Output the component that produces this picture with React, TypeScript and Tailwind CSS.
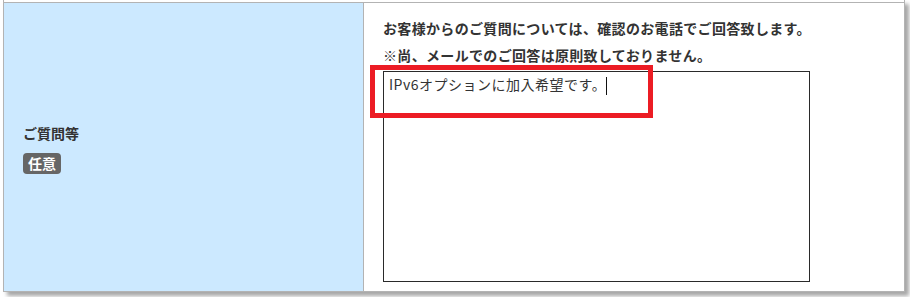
const jp = "font-['Noto_Sans_CJK_JP','Noto_Sans',sans-serif]";

export default function App() {
  return (
    <div className={`w-[910px] h-[297px] bg-white overflow-hidden pl-[3px] ${jp}`}>
      <div className="w-[902px] border-x border-b border-[#b3b3b3] shadow-[4px_4px_4px_rgba(0,0,0,0.35)] bg-white">
        {/* end of the previous row */}
        <div className="h-[2px]" />
        <div className="flex border-t border-[#b3b3b3] h-[289px]">
          <div className="w-[360px] bg-[#cce9ff] border-r border-[#b3b3b3] flex flex-col justify-center pl-[19px]">
            <div className="text-[14px] leading-[20px] font-bold text-[#333] mt-[2px]">ご質問等</div>
            <div className="mt-[7px]">
              <span className="inline-block h-[21px] px-[5px] rounded-[4px] bg-[#666] text-white text-[14px] leading-[21px] font-bold">
                任意
              </span>
            </div>
          </div>
          <div className="relative flex-1 pl-[19px] pt-[13px]">
            <p className="text-[14px] leading-[27px] font-bold text-[#333] tracking-[0.33px] -mt-px">
              お客様からのご質問については、確認のお電話でご回答致します。
            </p>
            <p className="text-[14px] leading-[27px] font-bold text-[#333] tracking-[0.33px]">
              ※尚、メールでのご回答は原則致しておりません。
            </p>
            <div className="mt-[2px] w-[427px] h-[211px] border border-[#2a2a2a] pl-[5px] pt-[2px] text-[14px] leading-[20px] text-[#333] tracking-[0.5px]">
              IPv6オプションに加入希望です。
              <span className="inline-block align-middle w-px h-[18px] bg-[#111]" />
            </div>
            {/* annotation box */}
            <div className="absolute left-[6px] top-[62px] w-[283px] h-[53px] border-[5px] border-[#ec1c24]" />
          </div>
        </div>
      </div>
    </div>
  );
}
